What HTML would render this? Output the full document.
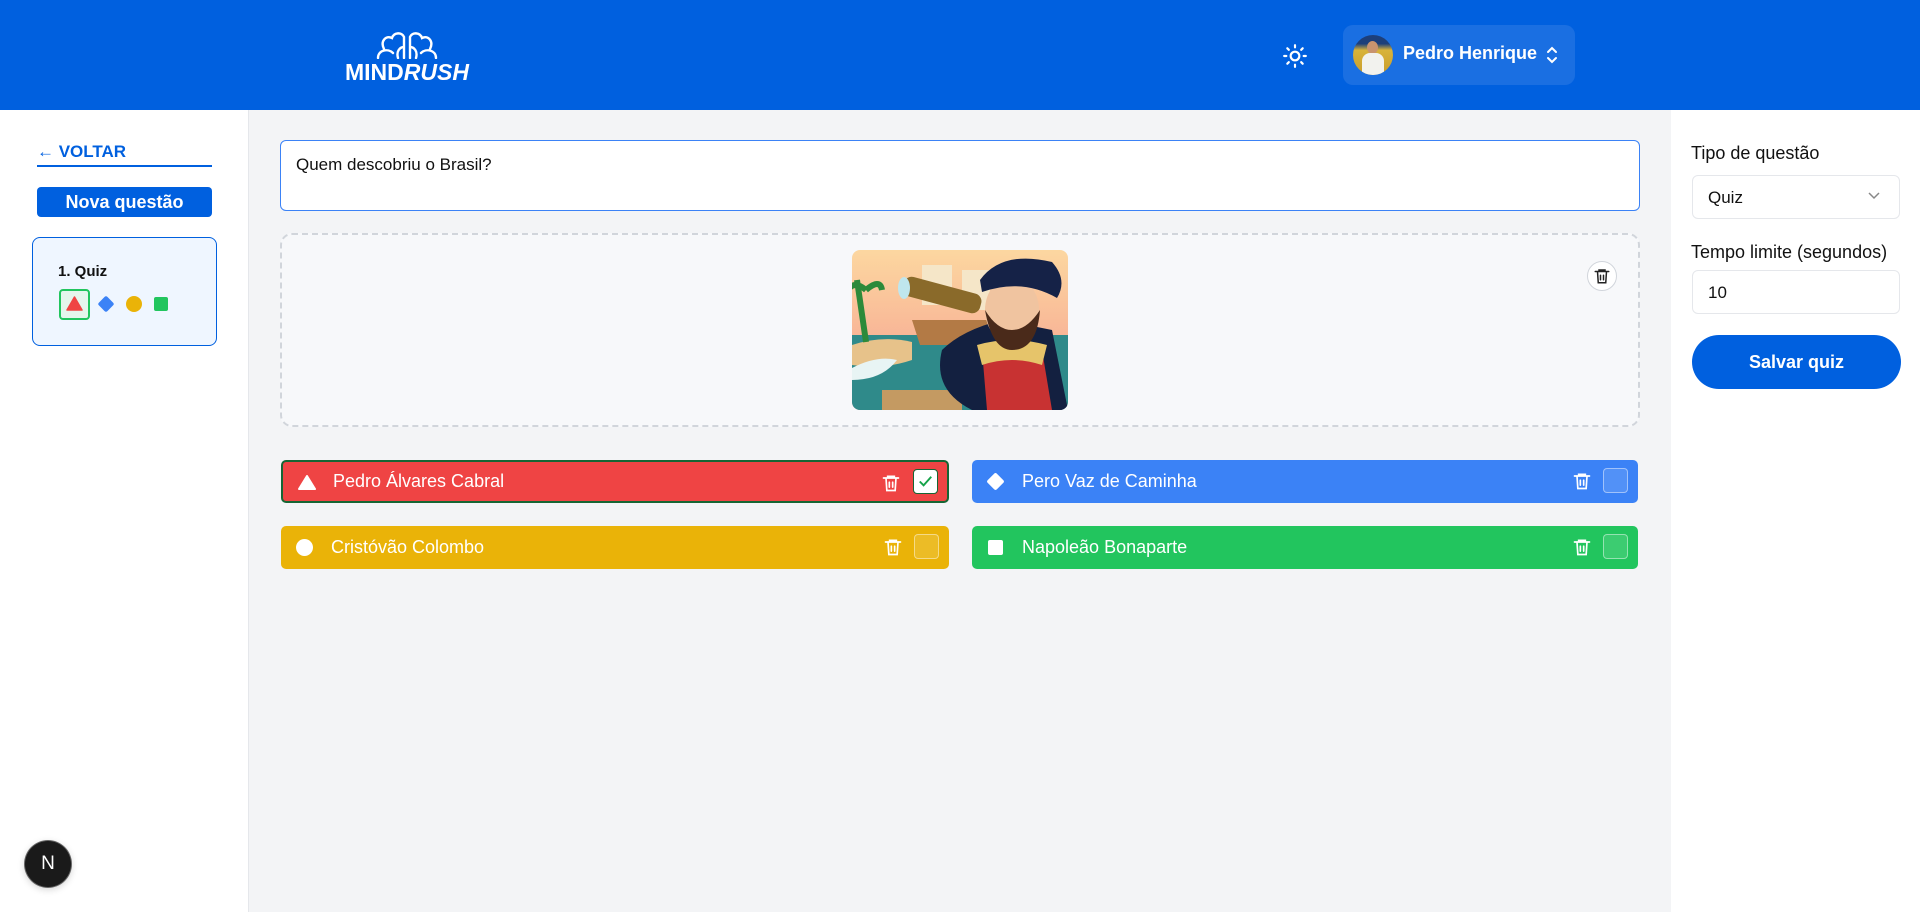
<!DOCTYPE html>
<html><head><meta charset="utf-8"><style>
*{box-sizing:border-box;margin:0;padding:0}
body{width:1920px;height:912px;overflow:hidden;background:#f3f4f6;font-family:"Liberation Sans",Arial,sans-serif;position:relative;color:#111}
.abs{position:absolute}
header{position:absolute;left:0;top:0;width:1920px;height:110px;background:#0060df}
.side{position:absolute;left:0;top:110px;width:249px;height:802px;background:#fff;border-right:1px solid #e5e7eb}
.right{position:absolute;left:1671px;top:110px;width:249px;height:802px;background:#fff}
.ans{position:absolute;height:43px;border-radius:5px;color:#fff;font-size:18px;display:flex;align-items:center}
.ans .t{position:absolute;left:50px}
.chk{position:absolute;right:10px;top:8px;width:25px;height:25px;border-radius:4px;border:1px solid rgba(255,255,255,.45);background:rgba(255,255,255,.12)}
.trash{position:absolute;right:46px;top:10px}
</style></head><body>
<header>
 <svg class="abs" style="left:371px;top:29px" width="72" height="30" viewBox="0 0 62 30" fill="none" stroke="#fff" stroke-width="2.4" stroke-linecap="round">
  <path d="M2 29 C2 21 12 19 17 24 M8 20 C4 12 10 6 16 9 C18 3 26 3 28 8 M28 8 L28 29 M22 29 C20 22 24 18 28 18"/>
  <path d="M60 29 C60 21 50 19 45 24 M54 20 C58 12 52 6 46 9 C44 3 36 3 34 8 M34 8 L34 29 M40 29 C42 22 38 18 34 18"/>
 </svg>
 <div class="abs" style="left:345px;top:59px;color:#fff;font-weight:bold;font-size:23px">MIND<i>RUSH</i></div>
 <svg class="abs" style="left:1282px;top:43px" width="26" height="26" viewBox="0 0 24 24" fill="none" stroke="#fff" stroke-width="2" stroke-linecap="round"><circle cx="12" cy="12" r="4"/><path d="M12 2v2M12 20v2M4.9 4.9l1.4 1.4M17.7 17.7l1.4 1.4M2 12h2M20 12h2M6.3 17.7l-1.4 1.4M19.1 4.9l-1.4 1.4"/></svg>
 <div class="abs" style="left:1343px;top:25px;width:232px;height:60px;border-radius:10px;background:#1a6fe2"></div>
 <div class="abs" style="left:1353px;top:35px;width:40px;height:40px;border-radius:50%;overflow:hidden;background:linear-gradient(#1d3f7a 0 22%,#d8b33a 38%,#c99d2c 100%)">
  <div class="abs" style="left:14px;top:6px;width:11px;height:13px;border-radius:50%;background:#c9946e"></div>
  <div class="abs" style="left:9px;top:18px;width:22px;height:26px;border-radius:8px 8px 0 0;background:#f2f2ee"></div>
 </div>
 <div class="abs" style="left:1403px;top:43px;color:#fff;font-weight:bold;font-size:18px">Pedro Henrique</div>
 <svg class="abs" style="left:1545px;top:45px" width="14" height="20" viewBox="0 0 14 20" fill="none" stroke="#fff" stroke-width="2" stroke-linecap="round"><path d="M3 7l4-4 4 4M3 13l4 4 4-4"/></svg>
</header>

<div class="side">
 <div class="abs" style="left:37px;top:32px;color:#0060df;font-weight:bold;font-size:17px">&#8592; VOLTAR</div>
 <div class="abs" style="left:37px;top:55px;width:175px;height:2px;background:#0060df"></div>
 <div class="abs" style="left:37px;top:77px;width:175px;height:30px;border-radius:4px;background:#0060df;color:#fff;font-weight:bold;font-size:18px;text-align:center;line-height:30px">Nova questão</div>
 <div class="abs" style="left:32px;top:127px;width:185px;height:109px;border:1px solid #0060df;border-radius:8px;background:#eff6ff">
  <div class="abs" style="left:25px;top:25px;font-weight:bold;font-size:15px">1. Quiz</div>
  <div class="abs" style="left:26px;top:51px;width:31px;height:31px;border:2px solid #22c55e;border-radius:4px;background:#e5f6ec"></div>
  <svg class="abs" style="left:33px;top:58px" width="17" height="15"><path d="M8.5 1L16 14H1z" fill="#ef4444" stroke="#ef4444" stroke-linejoin="round" stroke-width="1.5"/></svg>
  <div class="abs" style="left:67px;top:60px;width:12px;height:12px;background:#3b82f6;transform:rotate(45deg);border-radius:2px"></div>
  <div class="abs" style="left:93px;top:58px;width:16px;height:16px;background:#eab308;border-radius:50%"></div>
  <div class="abs" style="left:121px;top:59px;width:14px;height:14px;background:#22c55e;border-radius:2px"></div>
 </div>
 <div class="abs" style="left:25px;top:731px;width:46px;height:46px;border-radius:50%;background:#1a1a1a;box-shadow:0 0 0 1px #666,0 2px 8px rgba(0,0,0,.2);color:#fff;font-size:19px;text-align:center;line-height:46px">N</div>
</div>

<div class="abs" style="left:280px;top:140px;width:1360px;height:71px;background:#fff;border:1px solid #3b82f6;border-radius:6px;padding:14px 15px;font-size:17px">Quem descobriu o Brasil?</div>
<div class="abs" style="left:280px;top:233px;width:1360px;height:194px;border:2px dashed #d1d5db;border-radius:12px;background:#f7f8fa"></div>
<svg class="abs" style="left:852px;top:250px;border-radius:8px" width="216" height="160" viewBox="0 0 216 160">
 <defs><linearGradient id="sk" x1="0" y1="0" x2="0" y2="1"><stop offset="0" stop-color="#fcd7a0"/><stop offset="1" stop-color="#f59a8f"/></linearGradient></defs>
 <rect width="216" height="160" fill="url(#sk)"/>
 <rect y="85" width="216" height="75" fill="#2f8a8a"/>
 <path d="M0 95 Q30 85 60 92 L60 110 Q30 120 0 115z" fill="#e7c28a"/>
 <path d="M0 118 Q25 105 45 110 Q30 130 0 130z" fill="#e8f4f4"/>
 <path d="M5 30 L14 92 M14 40 Q2 30 -4 40 M14 40 Q28 28 30 40" stroke="#2c8a3a" stroke-width="6" fill="none"/>
 <path d="M60 70 L140 70 L130 95 L68 95z" fill="#b37a45"/>
 <rect x="70" y="15" width="30" height="40" fill="#f5e6c8"/><rect x="110" y="20" width="28" height="40" fill="#f5e6c8"/>
 <path d="M30 140 L110 140 L110 160 L30 160z" fill="#c49a62"/>
 <path d="M90 100 Q110 80 150 70 L200 80 L216 160 L120 160 Q80 140 90 100z" fill="#132040"/>
 <path d="M130 100 L190 100 L200 160 L135 160z" fill="#c83232"/>
 <path d="M125 95 Q160 85 195 95 L190 115 Q160 105 130 115z" fill="#e6c46a"/>
 <ellipse cx="160" cy="60" rx="27" ry="33" fill="#f0c4a0"/>
 <path d="M133 60 Q140 100 160 100 Q185 100 188 60 Q175 80 160 80 Q145 80 133 60z" fill="#4a2a1a"/>
 <path d="M128 30 Q150 0 200 12 Q216 30 205 48 Q170 28 130 42z" fill="#152247"/>
 <rect x="50" y="35" width="80" height="20" rx="8" fill="#8a6a2a" transform="rotate(15 90 45)"/>
 <ellipse cx="52" cy="38" rx="6" ry="11" fill="#bfe6ee"/>
</svg>
<div class="abs" style="left:1587px;top:261px;width:30px;height:30px;border-radius:50%;background:#fff;border:1px solid #d1d5db"></div>
<svg class="abs" style="left:1593px;top:267px" width="18" height="18" viewBox="0 0 24 24" fill="none" stroke="#222" stroke-width="2" stroke-linecap="round"><path d="M3 6h18M8 6V4h8v2M6 6l1 15h10l1-15M10 11v6M14 11v6"/></svg>

<div class="ans" style="left:281px;top:460px;width:668px;background:#ef4444;border:2px solid #166534">
 <svg class="abs" style="left:15px;top:12px" width="18" height="17"><path d="M9 2L17 15H1z" fill="#fff" stroke="#fff" stroke-linejoin="round" stroke-width="2"/></svg>
 <span class="t">Pedro Álvares Cabral</span>
 <svg class="trash" width="20" height="22" viewBox="0 0 24 24" fill="none" stroke="#fff" stroke-width="2" stroke-linecap="round"><path d="M3 6h18M8 6V4h8v2M6 6l1 15h10l1-15M10 11v6M14 11v6"/></svg>
 <div class="chk" style="background:#fff;border-color:#166534;right:9px;top:7px"><svg width="23" height="23" viewBox="0 0 24 24"><path d="M6 12l4 4 8-9" fill="none" stroke="#16a34a" stroke-width="2"/></svg></div>
</div>
<div class="ans" style="left:972px;top:460px;width:666px;background:#3b82f6">
 <div class="abs" style="left:17px;top:15px;width:13px;height:13px;background:#fff;transform:rotate(45deg);border-radius:2px"></div>
 <span class="t">Pero Vaz de Caminha</span>
 <svg class="trash" width="20" height="22" viewBox="0 0 24 24" fill="none" stroke="#fff" stroke-width="2" stroke-linecap="round"><path d="M3 6h18M8 6V4h8v2M6 6l1 15h10l1-15M10 11v6M14 11v6"/></svg>
 <div class="chk"></div>
</div>
<div class="ans" style="left:281px;top:526px;width:668px;background:#eab308">
 <div class="abs" style="left:15px;top:13px;width:17px;height:17px;background:#fff;border-radius:50%"></div>
 <span class="t">Cristóvão Colombo</span>
 <svg class="trash" width="20" height="22" viewBox="0 0 24 24" fill="none" stroke="#fff" stroke-width="2" stroke-linecap="round"><path d="M3 6h18M8 6V4h8v2M6 6l1 15h10l1-15M10 11v6M14 11v6"/></svg>
 <div class="chk"></div>
</div>
<div class="ans" style="left:972px;top:526px;width:666px;background:#22c55e">
 <div class="abs" style="left:16px;top:14px;width:15px;height:15px;background:#fff;border-radius:2px"></div>
 <span class="t">Napoleão Bonaparte</span>
 <svg class="trash" width="20" height="22" viewBox="0 0 24 24" fill="none" stroke="#fff" stroke-width="2" stroke-linecap="round"><path d="M3 6h18M8 6V4h8v2M6 6l1 15h10l1-15M10 11v6M14 11v6"/></svg>
 <div class="chk"></div>
</div>

<div class="right">
 <div class="abs" style="left:20px;top:33px;font-size:18px">Tipo de questão</div>
 <div class="abs" style="left:21px;top:65px;width:208px;height:44px;border:1px solid #e5e7eb;border-radius:6px;font-size:17px;padding:12px 15px">Quiz</div>
 <svg class="abs" style="left:196px;top:81px" width="14" height="10"><path d="M2 2l5 5 5-5" fill="none" stroke="#888" stroke-width="1.5"/></svg>
 <div class="abs" style="left:20px;top:132px;font-size:18px">Tempo limite (segundos)</div>
 <div class="abs" style="left:21px;top:160px;width:208px;height:44px;border:1px solid #e5e7eb;border-radius:6px;font-size:17px;padding:12px 15px">10</div>
 <div class="abs" style="left:21px;top:225px;width:209px;height:54px;border-radius:27px;background:#0060df;color:#fff;font-weight:bold;font-size:18px;text-align:center;line-height:54px">Salvar quiz</div>
</div>
</body></html>
